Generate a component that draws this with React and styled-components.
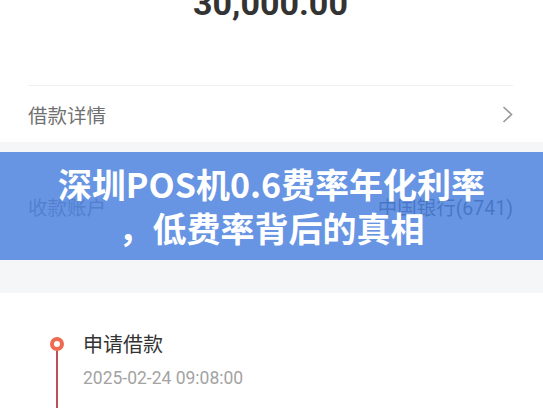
import React from "react";
import styled, { createGlobalStyle } from "styled-components";

const GlobalStyle = createGlobalStyle`
  body {
    margin: 0;
    background: #f5f6f8;
    font-family: Roboto, "Noto Sans CJK SC", sans-serif;
    overflow: hidden;
  }
`;

const steps = [{ title: "申请借款", time: "2025-02-24 09:08:00" }];

const App = () => {
  return (
    <Page>
      <GlobalStyle />
      <Card>
        <Amount>30,000.00</Amount>
        <Divider />
        <Row>
          <Label>借款详情</Label>
          <Chevron width="11" height="17" viewBox="0 0 11 17">
            <path d="M1.5 1 L9.5 8.5 L1.5 16" />
          </Chevron>
        </Row>
      </Card>

      <Card $gap={10}>
        <AccountRow>
          <Label>收款账户</Label>
          <Value>中国银行(6741)</Value>
        </AccountRow>
      </Card>

      <Card $gap={33}>
        <Timeline>
          {steps.map((step) => (
            <Step key={step.time}>
              <Track>
                <Dot />
                <Line />
              </Track>
              <StepBody>
                <StepTitle>{step.title}</StepTitle>
                <StepTime>{step.time}</StepTime>
              </StepBody>
            </Step>
          ))}
        </Timeline>
      </Card>

      <Banner>
        <BannerTitle>
          深圳POS机0.6费率年化利率
          <br />
          ，低费率背后的真相
        </BannerTitle>
      </Banner>
    </Page>
  );
};

export default App;

const Page = styled.div`
  position: relative;
  width: 543px;
  height: 408px;
  overflow: hidden;
`;

const Card = styled.div`
  background: #fff;
  margin-top: ${(p) => p.$gap || 0}px;
  padding: 0 30px 0 28px;
`;

const Amount = styled.div`
  margin-top: -14px;
  height: 34px;
  line-height: 34px;
  text-align: center;
  font-family: Roboto, sans-serif;
  font-weight: 700;
  font-size: 34px;
  color: #333;
`;

const Divider = styled.div`
  margin-top: 65px;
  height: 1px;
  background: #f0f0f0;
`;

const Row = styled.div`
  height: 56px;
  display: flex;
  align-items: center;
  justify-content: space-between;
`;

const AccountRow = styled(Row)`
  padding: 26px 0;
`;

const Label = styled.span`
  font-family: "Noto Sans CJK SC", sans-serif;
  font-size: 19.5px;
  color: #707070;
`;

const Value = styled.span`
  font-family: Roboto, "Noto Sans CJK SC", sans-serif;
  font-size: 19.5px;
  color: #333;
`;

const Chevron = styled.svg`
  fill: none;
  stroke: #9a9a9a;
  stroke-width: 1.6;
`;

const Timeline = styled.div`
  padding: 37px 0 0 22px;
`;

const Step = styled.div`
  display: flex;
  gap: 19px;
  height: 120px;
`;

const Track = styled.div`
  width: 14px;
  display: flex;
  flex-direction: column;
  align-items: center;
  padding-top: 7px;
`;

const Dot = styled.div`
  width: 14px;
  height: 14px;
  box-sizing: border-box;
  border-radius: 50%;
  border: 4.5px solid #ee6a50;
  background: #fff;
`;

const Line = styled.div`
  flex: 1;
  width: 2px;
  background: #b9505c;
`;

const StepBody = styled.div`
  display: flex;
  flex-direction: column;
`;

const StepTitle = styled.div`
  font-family: "Noto Sans CJK SC", sans-serif;
  font-size: 20px;
  line-height: 28px;
  color: #333;
`;

const StepTime = styled.div`
  margin-top: 8px;
  font-family: Roboto, sans-serif;
  font-size: 17.5px;
  line-height: 24px;
  color: #a3a3a3;
`;

const Banner = styled.div`
  position: absolute;
  top: 152px;
  left: 0;
  right: 0;
  height: 108px;
  background: rgba(76, 130, 222, 0.85);
  display: flex;
  align-items: center;
  justify-content: center;
`;

const BannerTitle = styled.div`
  font-family: "Noto Sans CJK SC", sans-serif;
  font-weight: 700;
  font-size: 34px;
  line-height: 44px;
  color: #fff;
  text-align: center;
`;
